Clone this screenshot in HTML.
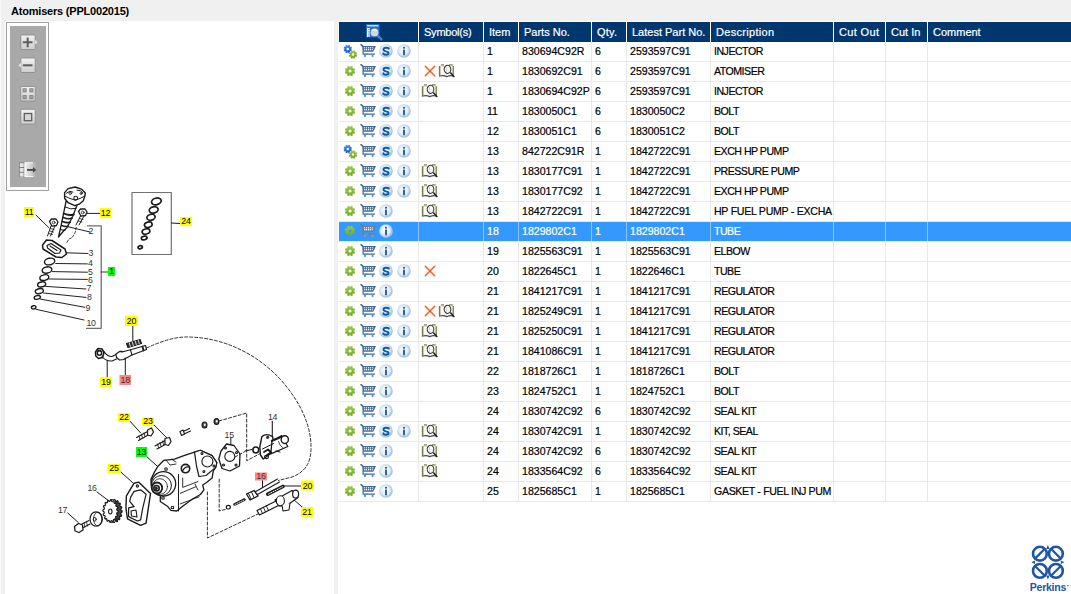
<!DOCTYPE html>
<html><head><meta charset="utf-8">
<style>
*{margin:0;padding:0;box-sizing:border-box}
html,body{width:1071px;height:594px;overflow:hidden;background:#f0f0f0;font-family:"Liberation Sans",sans-serif;position:relative}
.a{position:absolute}
.title{left:11px;top:5px;font-size:11px;font-weight:bold;color:#000;letter-spacing:-0.2px;white-space:nowrap}
.lp{left:5px;top:21px;width:329px;height:573px;background:#fff}
.tp{left:338px;top:21px;width:733px;height:573px;background:#fff}
.hdr{left:339px;top:22px;width:732px;height:20px;background:#00376f}
.hs{top:22px;width:1px;height:20px;background:#fff}
.ht{top:26px;font-size:11px;color:#fff;white-space:nowrap;-webkit-text-stroke:0.2px #fff}
.rl{left:339px;width:732px;height:1px;background:#e9e9e9}
.vl{width:1px;background:#e9e9e9}
.hl{left:339px;width:732px;height:19px;background:#3399ff}
.ct{font-size:10.6px;color:#000;white-space:nowrap;overflow:hidden;-webkit-text-stroke:0.2px #000}
.ct.w{-webkit-text-stroke:0.2px #fff}
.w{color:#fff}
</style></head><body>
<div class="a title">Atomisers (PPL002015)</div>
<div class="a lp"></div>
<div class="a" style="left:0;top:1px;width:1px;height:593px;background:#fafafa"></div>
<div class="a tp"></div>
<div class="a hdr"></div>

<div class="a hs" style="left:418px"></div>
<div class="a hs" style="left:483px"></div>
<div class="a hs" style="left:518px"></div>
<div class="a hs" style="left:591px"></div>
<div class="a hs" style="left:626px"></div>
<div class="a hs" style="left:710px"></div>
<div class="a hs" style="left:833px"></div>
<div class="a hs" style="left:885px"></div>
<div class="a hs" style="left:927px"></div>
<div class="a ht" style="left:424px;letter-spacing:-0.23px">Symbol(s)</div>
<div class="a ht" style="left:489px;letter-spacing:0px">Item</div>
<div class="a ht" style="left:524px;letter-spacing:0px">Parts No.</div>
<div class="a ht" style="left:597px;letter-spacing:0.2px">Qty.</div>
<div class="a ht" style="left:632px;letter-spacing:0px">Latest Part No.</div>
<div class="a ht" style="left:716px;letter-spacing:0.3px">Description</div>
<div class="a ht" style="left:839px;letter-spacing:0.36px">Cut Out</div>
<div class="a ht" style="left:891px;letter-spacing:0px">Cut In</div>
<div class="a ht" style="left:933px;letter-spacing:0px">Comment</div>
<div class="a vl" style="left:418px;top:42px;height:460px"></div>
<div class="a vl" style="left:483px;top:42px;height:460px"></div>
<div class="a vl" style="left:518px;top:42px;height:460px"></div>
<div class="a vl" style="left:591px;top:42px;height:460px"></div>
<div class="a vl" style="left:626px;top:42px;height:460px"></div>
<div class="a vl" style="left:710px;top:42px;height:460px"></div>
<div class="a vl" style="left:833px;top:42px;height:460px"></div>
<div class="a vl" style="left:885px;top:42px;height:460px"></div>
<div class="a vl" style="left:927px;top:42px;height:460px"></div>
<div class="a rl" style="top:61px"></div>
<svg class="a" style="left:343px;top:44px" width="15" height="15"><use href="#gear2"/></svg>
<svg class="a" style="left:360px;top:44px" width="17" height="15"><use href="#cart"/></svg>
<svg class="a" style="left:379px;top:44px" width="14" height="14"><use href="#sic"/></svg>
<svg class="a" style="left:397px;top:44px" width="14" height="14"><use href="#iic"/></svg>
<div class="a ct" style="left:487px;top:45px;width:31px">1</div>
<div class="a ct" style="left:522px;top:45px;width:69px">830694C92R</div>
<div class="a ct" style="left:595px;top:45px;width:31px">6</div>
<div class="a ct" style="left:630px;top:45px;width:80px">2593597C91</div>
<div class="a ct" style="left:714px;top:45px;width:119px;letter-spacing:-0.5px">INJECTOR</div>
<div class="a rl" style="top:81px"></div>
<svg class="a" style="left:344px;top:65px" width="12" height="12"><use href="#gear"/></svg>
<svg class="a" style="left:360px;top:64px" width="17" height="15"><use href="#cart"/></svg>
<svg class="a" style="left:379px;top:64px" width="14" height="14"><use href="#sic"/></svg>
<svg class="a" style="left:397px;top:64px" width="14" height="14"><use href="#iic"/></svg>
<svg class="a" style="left:424px;top:65px" width="12" height="12"><use href="#xic"/></svg>
<svg class="a" style="left:438px;top:64px" width="17" height="15"><use href="#book"/></svg>
<div class="a ct" style="left:487px;top:65px;width:31px">1</div>
<div class="a ct" style="left:522px;top:65px;width:69px">1830692C91</div>
<div class="a ct" style="left:595px;top:65px;width:31px">6</div>
<div class="a ct" style="left:630px;top:65px;width:80px">2593597C91</div>
<div class="a ct" style="left:714px;top:65px;width:119px;letter-spacing:-0.5px">ATOMISER</div>
<div class="a rl" style="top:101px"></div>
<svg class="a" style="left:344px;top:85px" width="12" height="12"><use href="#gear"/></svg>
<svg class="a" style="left:360px;top:84px" width="17" height="15"><use href="#cart"/></svg>
<svg class="a" style="left:379px;top:84px" width="14" height="14"><use href="#sic"/></svg>
<svg class="a" style="left:397px;top:84px" width="14" height="14"><use href="#iic"/></svg>
<svg class="a" style="left:421px;top:84px" width="17" height="15"><use href="#book"/></svg>
<div class="a ct" style="left:487px;top:85px;width:31px">1</div>
<div class="a ct" style="left:522px;top:85px;width:69px">1830694C92P</div>
<div class="a ct" style="left:595px;top:85px;width:31px">6</div>
<div class="a ct" style="left:630px;top:85px;width:80px">2593597C91</div>
<div class="a ct" style="left:714px;top:85px;width:119px;letter-spacing:-0.5px">INJECTOR</div>
<div class="a rl" style="top:121px"></div>
<svg class="a" style="left:344px;top:105px" width="12" height="12"><use href="#gear"/></svg>
<svg class="a" style="left:360px;top:104px" width="17" height="15"><use href="#cart"/></svg>
<svg class="a" style="left:379px;top:104px" width="14" height="14"><use href="#sic"/></svg>
<svg class="a" style="left:397px;top:104px" width="14" height="14"><use href="#iic"/></svg>
<div class="a ct" style="left:487px;top:105px;width:31px">11</div>
<div class="a ct" style="left:522px;top:105px;width:69px">1830050C1</div>
<div class="a ct" style="left:595px;top:105px;width:31px">6</div>
<div class="a ct" style="left:630px;top:105px;width:80px">1830050C2</div>
<div class="a ct" style="left:714px;top:105px;width:119px;letter-spacing:-0.5px">BOLT</div>
<div class="a rl" style="top:141px"></div>
<svg class="a" style="left:344px;top:125px" width="12" height="12"><use href="#gear"/></svg>
<svg class="a" style="left:360px;top:124px" width="17" height="15"><use href="#cart"/></svg>
<svg class="a" style="left:379px;top:124px" width="14" height="14"><use href="#sic"/></svg>
<svg class="a" style="left:397px;top:124px" width="14" height="14"><use href="#iic"/></svg>
<div class="a ct" style="left:487px;top:125px;width:31px">12</div>
<div class="a ct" style="left:522px;top:125px;width:69px">1830051C1</div>
<div class="a ct" style="left:595px;top:125px;width:31px">6</div>
<div class="a ct" style="left:630px;top:125px;width:80px">1830051C2</div>
<div class="a ct" style="left:714px;top:125px;width:119px;letter-spacing:-0.5px">BOLT</div>
<div class="a rl" style="top:161px"></div>
<svg class="a" style="left:343px;top:144px" width="15" height="15"><use href="#gear2"/></svg>
<svg class="a" style="left:360px;top:144px" width="17" height="15"><use href="#cart"/></svg>
<svg class="a" style="left:379px;top:144px" width="14" height="14"><use href="#sic"/></svg>
<svg class="a" style="left:397px;top:144px" width="14" height="14"><use href="#iic"/></svg>
<div class="a ct" style="left:487px;top:145px;width:31px">13</div>
<div class="a ct" style="left:522px;top:145px;width:69px">842722C91R</div>
<div class="a ct" style="left:595px;top:145px;width:31px">1</div>
<div class="a ct" style="left:630px;top:145px;width:80px">1842722C91</div>
<div class="a ct" style="left:714px;top:145px;width:119px;letter-spacing:-0.5px">EXCH HP PUMP</div>
<div class="a rl" style="top:181px"></div>
<svg class="a" style="left:344px;top:165px" width="12" height="12"><use href="#gear"/></svg>
<svg class="a" style="left:360px;top:164px" width="17" height="15"><use href="#cart"/></svg>
<svg class="a" style="left:379px;top:164px" width="14" height="14"><use href="#sic"/></svg>
<svg class="a" style="left:397px;top:164px" width="14" height="14"><use href="#iic"/></svg>
<svg class="a" style="left:421px;top:164px" width="17" height="15"><use href="#book"/></svg>
<div class="a ct" style="left:487px;top:165px;width:31px">13</div>
<div class="a ct" style="left:522px;top:165px;width:69px">1830177C91</div>
<div class="a ct" style="left:595px;top:165px;width:31px">1</div>
<div class="a ct" style="left:630px;top:165px;width:80px">1842722C91</div>
<div class="a ct" style="left:714px;top:165px;width:119px;letter-spacing:-0.5px">PRESSURE PUMP</div>
<div class="a rl" style="top:201px"></div>
<svg class="a" style="left:344px;top:185px" width="12" height="12"><use href="#gear"/></svg>
<svg class="a" style="left:360px;top:184px" width="17" height="15"><use href="#cart"/></svg>
<svg class="a" style="left:379px;top:184px" width="14" height="14"><use href="#sic"/></svg>
<svg class="a" style="left:397px;top:184px" width="14" height="14"><use href="#iic"/></svg>
<svg class="a" style="left:421px;top:184px" width="17" height="15"><use href="#book"/></svg>
<div class="a ct" style="left:487px;top:185px;width:31px">13</div>
<div class="a ct" style="left:522px;top:185px;width:69px">1830177C92</div>
<div class="a ct" style="left:595px;top:185px;width:31px">1</div>
<div class="a ct" style="left:630px;top:185px;width:80px">1842722C91</div>
<div class="a ct" style="left:714px;top:185px;width:119px;letter-spacing:-0.5px">EXCH HP PUMP</div>
<div class="a rl" style="top:221px"></div>
<svg class="a" style="left:344px;top:205px" width="12" height="12"><use href="#gear"/></svg>
<svg class="a" style="left:360px;top:204px" width="17" height="15"><use href="#cart"/></svg>
<svg class="a" style="left:379px;top:204px" width="14" height="14"><use href="#iic"/></svg>
<svg class="a" style="left:421px;top:204px" width="17" height="15"><use href="#book"/></svg>
<div class="a ct" style="left:487px;top:205px;width:31px">13</div>
<div class="a ct" style="left:522px;top:205px;width:69px">1842722C91</div>
<div class="a ct" style="left:595px;top:205px;width:31px">1</div>
<div class="a ct" style="left:630px;top:205px;width:80px">1842722C91</div>
<div class="a ct" style="left:714px;top:205px;width:119px;letter-spacing:-0.28px">HP FUEL PUMP - EXCHA</div>
<div class="a hl" style="top:222px"></div>
<div class="a" style="left:418px;top:222px;width:1px;height:19px;background:#8cc4ff"></div>
<div class="a" style="left:483px;top:222px;width:1px;height:19px;background:#8cc4ff"></div>
<div class="a" style="left:518px;top:222px;width:1px;height:19px;background:#8cc4ff"></div>
<div class="a" style="left:591px;top:222px;width:1px;height:19px;background:#8cc4ff"></div>
<div class="a" style="left:626px;top:222px;width:1px;height:19px;background:#8cc4ff"></div>
<div class="a" style="left:710px;top:222px;width:1px;height:19px;background:#8cc4ff"></div>
<div class="a" style="left:833px;top:222px;width:1px;height:19px;background:#8cc4ff"></div>
<div class="a" style="left:885px;top:222px;width:1px;height:19px;background:#8cc4ff"></div>
<div class="a" style="left:927px;top:222px;width:1px;height:19px;background:#8cc4ff"></div>
<div class="a rl" style="top:241px"></div>
<svg class="a" style="left:344px;top:225px" width="12" height="12"><use href="#gear"/></svg>
<svg class="a" style="left:360px;top:224px" width="17" height="15"><use href="#cartsel"/></svg>
<svg class="a" style="left:379px;top:224px" width="14" height="14"><use href="#iic"/></svg>
<div class="a ct w" style="left:487px;top:225px;width:31px">18</div>
<div class="a ct w" style="left:522px;top:225px;width:69px">1829802C1</div>
<div class="a ct w" style="left:595px;top:225px;width:31px">1</div>
<div class="a ct w" style="left:630px;top:225px;width:80px">1829802C1</div>
<div class="a ct w" style="left:714px;top:225px;width:119px;letter-spacing:-0.5px">TUBE</div>
<div class="a rl" style="top:261px"></div>
<svg class="a" style="left:344px;top:245px" width="12" height="12"><use href="#gear"/></svg>
<svg class="a" style="left:360px;top:244px" width="17" height="15"><use href="#cart"/></svg>
<svg class="a" style="left:379px;top:244px" width="14" height="14"><use href="#iic"/></svg>
<div class="a ct" style="left:487px;top:245px;width:31px">19</div>
<div class="a ct" style="left:522px;top:245px;width:69px">1825563C91</div>
<div class="a ct" style="left:595px;top:245px;width:31px">1</div>
<div class="a ct" style="left:630px;top:245px;width:80px">1825563C91</div>
<div class="a ct" style="left:714px;top:245px;width:119px;letter-spacing:-0.5px">ELBOW</div>
<div class="a rl" style="top:281px"></div>
<svg class="a" style="left:344px;top:265px" width="12" height="12"><use href="#gear"/></svg>
<svg class="a" style="left:360px;top:264px" width="17" height="15"><use href="#cart"/></svg>
<svg class="a" style="left:379px;top:264px" width="14" height="14"><use href="#sic"/></svg>
<svg class="a" style="left:397px;top:264px" width="14" height="14"><use href="#iic"/></svg>
<svg class="a" style="left:424px;top:265px" width="12" height="12"><use href="#xic"/></svg>
<div class="a ct" style="left:487px;top:265px;width:31px">20</div>
<div class="a ct" style="left:522px;top:265px;width:69px">1822645C1</div>
<div class="a ct" style="left:595px;top:265px;width:31px">1</div>
<div class="a ct" style="left:630px;top:265px;width:80px">1822646C1</div>
<div class="a ct" style="left:714px;top:265px;width:119px;letter-spacing:-0.5px">TUBE</div>
<div class="a rl" style="top:301px"></div>
<svg class="a" style="left:344px;top:285px" width="12" height="12"><use href="#gear"/></svg>
<svg class="a" style="left:360px;top:284px" width="17" height="15"><use href="#cart"/></svg>
<svg class="a" style="left:379px;top:284px" width="14" height="14"><use href="#iic"/></svg>
<div class="a ct" style="left:487px;top:285px;width:31px">21</div>
<div class="a ct" style="left:522px;top:285px;width:69px">1841217C91</div>
<div class="a ct" style="left:595px;top:285px;width:31px">1</div>
<div class="a ct" style="left:630px;top:285px;width:80px">1841217C91</div>
<div class="a ct" style="left:714px;top:285px;width:119px;letter-spacing:-0.5px">REGULATOR</div>
<div class="a rl" style="top:321px"></div>
<svg class="a" style="left:344px;top:305px" width="12" height="12"><use href="#gear"/></svg>
<svg class="a" style="left:360px;top:304px" width="17" height="15"><use href="#cart"/></svg>
<svg class="a" style="left:379px;top:304px" width="14" height="14"><use href="#sic"/></svg>
<svg class="a" style="left:397px;top:304px" width="14" height="14"><use href="#iic"/></svg>
<svg class="a" style="left:424px;top:305px" width="12" height="12"><use href="#xic"/></svg>
<svg class="a" style="left:438px;top:304px" width="17" height="15"><use href="#book"/></svg>
<div class="a ct" style="left:487px;top:305px;width:31px">21</div>
<div class="a ct" style="left:522px;top:305px;width:69px">1825249C91</div>
<div class="a ct" style="left:595px;top:305px;width:31px">1</div>
<div class="a ct" style="left:630px;top:305px;width:80px">1841217C91</div>
<div class="a ct" style="left:714px;top:305px;width:119px;letter-spacing:-0.5px">REGULATOR</div>
<div class="a rl" style="top:341px"></div>
<svg class="a" style="left:344px;top:325px" width="12" height="12"><use href="#gear"/></svg>
<svg class="a" style="left:360px;top:324px" width="17" height="15"><use href="#cart"/></svg>
<svg class="a" style="left:379px;top:324px" width="14" height="14"><use href="#sic"/></svg>
<svg class="a" style="left:397px;top:324px" width="14" height="14"><use href="#iic"/></svg>
<svg class="a" style="left:421px;top:324px" width="17" height="15"><use href="#book"/></svg>
<div class="a ct" style="left:487px;top:325px;width:31px">21</div>
<div class="a ct" style="left:522px;top:325px;width:69px">1825250C91</div>
<div class="a ct" style="left:595px;top:325px;width:31px">1</div>
<div class="a ct" style="left:630px;top:325px;width:80px">1841217C91</div>
<div class="a ct" style="left:714px;top:325px;width:119px;letter-spacing:-0.5px">REGULATOR</div>
<div class="a rl" style="top:361px"></div>
<svg class="a" style="left:344px;top:345px" width="12" height="12"><use href="#gear"/></svg>
<svg class="a" style="left:360px;top:344px" width="17" height="15"><use href="#cart"/></svg>
<svg class="a" style="left:379px;top:344px" width="14" height="14"><use href="#sic"/></svg>
<svg class="a" style="left:397px;top:344px" width="14" height="14"><use href="#iic"/></svg>
<svg class="a" style="left:421px;top:344px" width="17" height="15"><use href="#book"/></svg>
<div class="a ct" style="left:487px;top:345px;width:31px">21</div>
<div class="a ct" style="left:522px;top:345px;width:69px">1841086C91</div>
<div class="a ct" style="left:595px;top:345px;width:31px">1</div>
<div class="a ct" style="left:630px;top:345px;width:80px">1841217C91</div>
<div class="a ct" style="left:714px;top:345px;width:119px;letter-spacing:-0.5px">REGULATOR</div>
<div class="a rl" style="top:381px"></div>
<svg class="a" style="left:344px;top:365px" width="12" height="12"><use href="#gear"/></svg>
<svg class="a" style="left:360px;top:364px" width="17" height="15"><use href="#cart"/></svg>
<svg class="a" style="left:379px;top:364px" width="14" height="14"><use href="#iic"/></svg>
<div class="a ct" style="left:487px;top:365px;width:31px">22</div>
<div class="a ct" style="left:522px;top:365px;width:69px">1818726C1</div>
<div class="a ct" style="left:595px;top:365px;width:31px">1</div>
<div class="a ct" style="left:630px;top:365px;width:80px">1818726C1</div>
<div class="a ct" style="left:714px;top:365px;width:119px;letter-spacing:-0.5px">BOLT</div>
<div class="a rl" style="top:401px"></div>
<svg class="a" style="left:344px;top:385px" width="12" height="12"><use href="#gear"/></svg>
<svg class="a" style="left:360px;top:384px" width="17" height="15"><use href="#cart"/></svg>
<svg class="a" style="left:379px;top:384px" width="14" height="14"><use href="#iic"/></svg>
<div class="a ct" style="left:487px;top:385px;width:31px">23</div>
<div class="a ct" style="left:522px;top:385px;width:69px">1824752C1</div>
<div class="a ct" style="left:595px;top:385px;width:31px">1</div>
<div class="a ct" style="left:630px;top:385px;width:80px">1824752C1</div>
<div class="a ct" style="left:714px;top:385px;width:119px;letter-spacing:-0.5px">BOLT</div>
<div class="a rl" style="top:421px"></div>
<svg class="a" style="left:344px;top:405px" width="12" height="12"><use href="#gear"/></svg>
<svg class="a" style="left:360px;top:404px" width="17" height="15"><use href="#cart"/></svg>
<svg class="a" style="left:379px;top:404px" width="14" height="14"><use href="#iic"/></svg>
<div class="a ct" style="left:487px;top:405px;width:31px">24</div>
<div class="a ct" style="left:522px;top:405px;width:69px">1830742C92</div>
<div class="a ct" style="left:595px;top:405px;width:31px">6</div>
<div class="a ct" style="left:630px;top:405px;width:80px">1830742C92</div>
<div class="a ct" style="left:714px;top:405px;width:119px;letter-spacing:-0.5px">SEAL KIT</div>
<div class="a rl" style="top:441px"></div>
<svg class="a" style="left:344px;top:425px" width="12" height="12"><use href="#gear"/></svg>
<svg class="a" style="left:360px;top:424px" width="17" height="15"><use href="#cart"/></svg>
<svg class="a" style="left:379px;top:424px" width="14" height="14"><use href="#sic"/></svg>
<svg class="a" style="left:397px;top:424px" width="14" height="14"><use href="#iic"/></svg>
<svg class="a" style="left:421px;top:424px" width="17" height="15"><use href="#book"/></svg>
<div class="a ct" style="left:487px;top:425px;width:31px">24</div>
<div class="a ct" style="left:522px;top:425px;width:69px">1830742C91</div>
<div class="a ct" style="left:595px;top:425px;width:31px">1</div>
<div class="a ct" style="left:630px;top:425px;width:80px">1830742C92</div>
<div class="a ct" style="left:714px;top:425px;width:119px;letter-spacing:-0.5px">KIT, SEAL</div>
<div class="a rl" style="top:461px"></div>
<svg class="a" style="left:344px;top:445px" width="12" height="12"><use href="#gear"/></svg>
<svg class="a" style="left:360px;top:444px" width="17" height="15"><use href="#cart"/></svg>
<svg class="a" style="left:379px;top:444px" width="14" height="14"><use href="#iic"/></svg>
<svg class="a" style="left:421px;top:444px" width="17" height="15"><use href="#book"/></svg>
<div class="a ct" style="left:487px;top:445px;width:31px">24</div>
<div class="a ct" style="left:522px;top:445px;width:69px">1830742C92</div>
<div class="a ct" style="left:595px;top:445px;width:31px">6</div>
<div class="a ct" style="left:630px;top:445px;width:80px">1830742C92</div>
<div class="a ct" style="left:714px;top:445px;width:119px;letter-spacing:-0.5px">SEAL KIT</div>
<div class="a rl" style="top:481px"></div>
<svg class="a" style="left:344px;top:465px" width="12" height="12"><use href="#gear"/></svg>
<svg class="a" style="left:360px;top:464px" width="17" height="15"><use href="#cart"/></svg>
<svg class="a" style="left:379px;top:464px" width="14" height="14"><use href="#iic"/></svg>
<svg class="a" style="left:421px;top:464px" width="17" height="15"><use href="#book"/></svg>
<div class="a ct" style="left:487px;top:465px;width:31px">24</div>
<div class="a ct" style="left:522px;top:465px;width:69px">1833564C92</div>
<div class="a ct" style="left:595px;top:465px;width:31px">6</div>
<div class="a ct" style="left:630px;top:465px;width:80px">1833564C92</div>
<div class="a ct" style="left:714px;top:465px;width:119px;letter-spacing:-0.5px">SEAL KIT</div>
<div class="a rl" style="top:501px"></div>
<svg class="a" style="left:344px;top:485px" width="12" height="12"><use href="#gear"/></svg>
<svg class="a" style="left:360px;top:484px" width="17" height="15"><use href="#cart"/></svg>
<svg class="a" style="left:379px;top:484px" width="14" height="14"><use href="#iic"/></svg>
<div class="a ct" style="left:487px;top:485px;width:31px">25</div>
<div class="a ct" style="left:522px;top:485px;width:69px">1825685C1</div>
<div class="a ct" style="left:595px;top:485px;width:31px">1</div>
<div class="a ct" style="left:630px;top:485px;width:80px">1825685C1</div>
<div class="a ct" style="left:714px;top:485px;width:119px;letter-spacing:-0.34px">GASKET - FUEL INJ PUM</div>
<svg width="0" height="0" style="position:absolute;left:0;top:0">
<defs>
<radialGradient id="cg" cx="0.45" cy="0.45" r="0.6">
<stop offset="0" stop-color="#ffffff"/><stop offset="0.55" stop-color="#e2edf7"/><stop offset="0.85" stop-color="#9fc1e2"/><stop offset="1" stop-color="#b9d3eb"/>
</radialGradient>
<linearGradient id="gG" x1="0" y1="0" x2="0" y2="1"><stop offset="0" stop-color="#9acb3e"/><stop offset="1" stop-color="#6da72a"/></linearGradient>
<linearGradient id="gB" x1="0" y1="0" x2="0" y2="1"><stop offset="0" stop-color="#4b8bf5"/><stop offset="1" stop-color="#1c56c8"/></linearGradient>
<g id="gear"><path fill="url(#gG)" fill-rule="evenodd" d="M11.19,6.82 L10.25,9.09 L8.93,8.42 L8.42,8.93 L9.09,10.25 L6.82,11.19 L6.36,9.78 L5.64,9.78 L5.18,11.19 L2.91,10.25 L3.58,8.93 L3.07,8.42 L1.75,9.09 L0.81,6.82 L2.22,6.36 L2.22,5.64 L0.81,5.18 L1.75,2.91 L3.07,3.58 L3.58,3.07 L2.91,1.75 L5.18,0.81 L5.64,2.22 L6.36,2.22 L6.82,0.81 L9.09,1.75 L8.42,3.07 L8.93,3.58 L10.25,2.91 L11.19,5.18 L9.78,5.64 L9.78,6.36Z M7.50,6.00 A1.5,1.5 0 1 0 4.50,6.00 A1.5,1.5 0 1 0 7.50,6.00Z"/></g>
<g id="gear2"><path fill="url(#gB)" fill-rule="evenodd" d="M9.05,5.67 L8.28,7.53 L7.27,7.04 L6.84,7.47 L7.33,8.48 L5.47,9.25 L5.10,8.19 L4.50,8.19 L4.13,9.25 L2.27,8.48 L2.76,7.47 L2.33,7.04 L1.32,7.53 L0.55,5.67 L1.61,5.30 L1.61,4.70 L0.55,4.33 L1.32,2.47 L2.33,2.96 L2.76,2.53 L2.27,1.52 L4.13,0.75 L4.50,1.81 L5.10,1.81 L5.47,0.75 L7.33,1.52 L6.84,2.53 L7.27,2.96 L8.28,2.47 L9.05,4.33 L7.99,4.70 L7.99,5.30Z M6.00,5.00 A1.2,1.2 0 1 0 3.60,5.00 A1.2,1.2 0 1 0 6.00,5.00Z"/><path fill="url(#gG)" fill-rule="evenodd" d="M14.25,11.17 L13.48,13.03 L12.47,12.54 L12.04,12.97 L12.53,13.98 L10.67,14.75 L10.30,13.69 L9.70,13.69 L9.33,14.75 L7.47,13.98 L7.96,12.97 L7.53,12.54 L6.52,13.03 L5.75,11.17 L6.81,10.80 L6.81,10.20 L5.75,9.83 L6.52,7.97 L7.53,8.46 L7.96,8.03 L7.47,7.02 L9.33,6.25 L9.70,7.31 L10.30,7.31 L10.67,6.25 L12.53,7.02 L12.04,8.03 L12.47,8.46 L13.48,7.97 L14.25,9.83 L13.19,10.20 L13.19,10.80Z M11.20,10.50 A1.2,1.2 0 1 0 8.80,10.50 A1.2,1.2 0 1 0 11.20,10.50Z"/></g>
<g id="cart">
<path d="M1,0.6 L3,2.4" stroke="#44699a" stroke-width="1.5" stroke-linecap="round"/>
<path d="M2.4,2 H16 L13.2,7.8 H3.3 Z" fill="#44699a"/>
<g fill="#fff"><rect x="3.6" y="3.2" width="1.4" height="1.1"/><rect x="5.9" y="3.2" width="1.2" height="1.1"/><rect x="8" y="3.2" width="1.2" height="1.1"/><rect x="10" y="3.2" width="1.1" height="1.1"/><rect x="12.1" y="3.2" width="1.1" height="1.1"/>
<rect x="4.2" y="4.9" width="1.2" height="1.5"/><rect x="6" y="4.9" width="1.2" height="1.5"/><rect x="8.1" y="4.9" width="1.2" height="1.5"/><rect x="10.1" y="4.9" width="1.1" height="1.5"/><rect x="12" y="4.9" width="0.8" height="1.3"/></g>
<path d="M3.1,2.2 V10.2 H14.9" stroke="#44699a" stroke-width="1.2" fill="none"/>
<path d="M4.5,10.2 H8" stroke="#3d8fe0" stroke-width="1.0"/>
<circle cx="5" cy="11.9" r="1.05" fill="#3d8fe0"/><circle cx="12.6" cy="11.9" r="1.05" fill="#3d8fe0"/>
</g>
<g id="cartsel">
<path d="M1,0.6 L3,2.4" stroke="#6d7b90" stroke-width="1.5" stroke-linecap="round"/>
<path d="M2.4,2 H16 L13.2,7.8 H3.3 Z" fill="#6d7b90"/>
<g fill="#fff"><rect x="3.6" y="3.2" width="1.4" height="1.1"/><rect x="5.9" y="3.2" width="1.2" height="1.1"/><rect x="8" y="3.2" width="1.2" height="1.1"/><rect x="10" y="3.2" width="1.1" height="1.1"/><rect x="12.1" y="3.2" width="1.1" height="1.1"/>
<rect x="4.2" y="4.9" width="1.2" height="1.5"/><rect x="6" y="4.9" width="1.2" height="1.5"/><rect x="8.1" y="4.9" width="1.2" height="1.5"/><rect x="10.1" y="4.9" width="1.1" height="1.5"/><rect x="12" y="4.9" width="0.8" height="1.3"/></g>
<path d="M3.1,2.2 V10.2 H14.9" stroke="#6d7b90" stroke-width="1.2" fill="none"/>
<path d="M4.5,10.2 H8" stroke="#7f9fc8" stroke-width="1.0"/>
<circle cx="5" cy="11.9" r="1.05" fill="#7f9fc8"/><circle cx="12.6" cy="11.9" r="1.05" fill="#7f9fc8"/>
</g>
<g id="sic"><circle cx="7" cy="7" r="6.8" fill="url(#cg)"/><path d="M9.7,5.6 V4.3 C9.1,3.8 8.2,3.7 7,3.7 C5.4,3.7 4.5,4.4 4.5,5.5 C4.5,6.8 5.7,7.1 7,7.4 C8.5,7.7 9.6,8.1 9.6,9.3 C9.6,10.3 8.6,10.7 7,10.7 C5.8,10.7 5,10.5 4.4,10 V8.6" stroke="#0b5aa6" stroke-width="1.9" fill="none"/></g>
<g id="iic"><circle cx="7" cy="7" r="6.8" fill="url(#cg)"/><rect x="6" y="2.9" width="2" height="1.7" fill="#2c62a8"/><rect x="6" y="5.6" width="2" height="5.6" fill="#2c62a8"/></g>
<g id="xic"><path d="M1.3,1.3 L10.7,10.7 M10.7,1.3 L1.3,10.7" stroke="#ff5a1a" stroke-width="1.5" stroke-linecap="round"/></g>
<g id="book">
<path d="M2,1.5 H14.8 V12.6 H2 Z" fill="#f6f6f6"/>
<path d="M2.5,2 L8.5,3 L8.5,12 L2.5,11 Z" fill="#fbfbfb" stroke="#bdbdbd" stroke-width="0.6"/>
<path d="M1.5,2 V12.8 M15.2,2 V12.8" stroke="#7b7b45" stroke-width="1.3"/>
<path d="M3,0.9 H6 M11,0.9 H14.8" stroke="#85854a" stroke-width="1.1"/>
<path d="M2,12 Q5.5,11 8.8,12.7 Q12,11 15,12" stroke="#4d4d4d" stroke-width="1.1" fill="none"/>
<ellipse cx="9.5" cy="5.3" rx="3.3" ry="4.1" stroke="#3a3a3a" stroke-width="1.05" fill="none"/>
<path d="M12.3,8.6 L16.3,12.9" stroke="#1e1e1e" stroke-width="1.5"/>
</g>
</defs></svg>
<svg class="a" style="left:365px;top:23px" width="19" height="19">
<rect x="1" y="1" width="13.5" height="13.5" fill="#1f6fc0"/>
<rect x="2" y="2.2" width="11.5" height="1.2" fill="#f2f6fb"/>
<rect x="2" y="5" width="2.8" height="9" fill="#ffffff"/>
<rect x="3.3" y="6.2" width="1.2" height="1" fill="#1f5fb0"/><rect x="3.3" y="8.4" width="1.2" height="1" fill="#1f5fb0"/><rect x="3.3" y="10.6" width="1.2" height="1" fill="#1f5fb0"/><rect x="3.3" y="12.6" width="1.2" height="1" fill="#1f5fb0"/>
<path d="M12.2,12.2 L17,17" stroke="#3f86d6" stroke-width="2.4"/>
<circle cx="9.5" cy="9.4" r="4.7" fill="#2a73c4"/>
<circle cx="9.5" cy="9.4" r="3.9" fill="#d4d7dc"/>
<path d="M7.2,7.6 Q9.5,6 12,7.8" stroke="#ffffff" stroke-width="1.2" fill="none"/>
</svg>

<svg class="a" style="left:0;top:0" width="334" height="594" viewBox="0 0 334 594">
<defs>
<linearGradient id="btg" x1="0" y1="0" x2="0" y2="1"><stop offset="0" stop-color="#f4f4f4"/><stop offset="0.5" stop-color="#dedede"/><stop offset="1" stop-color="#cfcfcf"/></linearGradient>
</defs>
<rect x="6.5" y="22.5" width="42" height="168" fill="#fff" stroke="#a0a0a0" stroke-width="1"/>
<rect x="10" y="26" width="36" height="161" fill="#a9a9a9"/>
<g>
<rect x="20.8" y="35" width="14.4" height="14.5" rx="1" fill="url(#btg)" stroke="#8c8c8c" stroke-width="0.9"/>
<path d="M22.8,42.3 H32.5 M27.7,37.5 V47.2" stroke="#5e5e5e" stroke-width="2"/>
<path d="M35.2,39.8 L37.3,42.3 L35.2,44.8 Z" fill="#e8e8e8"/>
<rect x="20.8" y="58" width="14.4" height="14.5" rx="1" fill="url(#btg)" stroke="#8c8c8c" stroke-width="0.9"/>
<path d="M22.8,65.3 H32.5" stroke="#5e5e5e" stroke-width="2"/>
<path d="M20.8,62.8 L18.7,65.3 L20.8,67.8 Z" fill="#e8e8e8"/>
<rect x="20.8" y="86.5" width="14.4" height="14.5" rx="1" fill="url(#btg)" stroke="#8c8c8c" stroke-width="0.9"/>
<rect x="22.6" y="88.3" width="4" height="4" fill="#7a7a7a"/><rect x="29.4" y="88.3" width="4" height="4" fill="#7a7a7a"/>
<rect x="22.6" y="95.1" width="4" height="4" fill="#7a7a7a"/><rect x="29.4" y="95.1" width="4" height="4" fill="#7a7a7a"/>
<rect x="23.3" y="89" width="2.6" height="2.6" fill="#a0a0a0"/><rect x="30.1" y="89" width="2.6" height="2.6" fill="#a0a0a0"/>
<rect x="23.3" y="95.8" width="2.6" height="2.6" fill="#a0a0a0"/><rect x="30.1" y="95.8" width="2.6" height="2.6" fill="#a0a0a0"/>
<rect x="20.8" y="109.3" width="14.4" height="14.8" rx="1" fill="url(#btg)" stroke="#8c8c8c" stroke-width="0.9"/>
<rect x="24.3" y="113.5" width="7.4" height="7.2" fill="#d4d4d4" stroke="#5e5e5e" stroke-width="1.3"/>
<linearGradient id="pg" x1="0" y1="0" x2="1" y2="0"><stop offset="0" stop-color="#f0f0f0"/><stop offset="0.6" stop-color="#d0d0d0"/><stop offset="1" stop-color="#a9a9a9"/></linearGradient>
<rect x="19" y="162.4" width="5.2" height="14.6" fill="#7d7d7d"/>
<rect x="19.8" y="163.2" width="3.8" height="3.8" fill="#e6e6e6"/>
<rect x="19.8" y="168" width="3.8" height="3.8" fill="#e6e6e6"/>
<rect x="19.8" y="172.8" width="3.8" height="3.8" fill="#e6e6e6"/>
<rect x="24.5" y="162.4" width="11.5" height="14.6" fill="url(#pg)"/>
<path d="M25.2,162.8 V176.6 H33 M25.2,162.8 H33" stroke="#fff" stroke-width="0.9" fill="none"/>
<path d="M27,169.9 H34" stroke="#4a4a4a" stroke-width="1.9"/>
<path d="M33,167 L36.3,169.9 L33,172.8 Z" fill="#4a4a4a"/>
</g>
</svg>
<svg class="a" style="left:0;top:0" width="334" height="594" viewBox="0 0 334 594" font-family="Liberation Sans">
<g fill="none" stroke="#1a1a1a" stroke-width="1.1" stroke-linejoin="round" stroke-linecap="round">
<!-- ===== Injector group ===== -->
<path d="M66.1,201.2 L61.1,225.4 L59.5,232.5 L58.5,237 L63.1,231.5 L67.1,227.4 L72.7,216.3 L77.2,204.7 Z" fill="#fff" stroke-width="1.3"/>
<path d="M65,207 Q71,210 76,208.5" stroke-width="1"/>
<path d="M63.8,213.5 Q69,216 73.8,214.5" stroke-width="1.9"/>
<path d="M63.2,217.5 Q68,219.5 72,218.3" stroke-width="1.7"/>
<path d="M62.5,221.5 Q67,223.3 70.2,222.2" stroke-width="1.7"/>
<path d="M61.8,225.6 Q65.5,227 68.2,226.2" stroke-width="1.6"/>
<path d="M60.5,229.5 Q63,230.5 65,230" stroke-width="1.3"/>
<path d="M64.6,192.6 L68.1,188.6 L75.2,187 L81.3,189.1 L85.3,193.1 L84.8,196.1 L83.3,200.7 L79.2,204.2 L74.7,205.7 L68.1,202.7 L64.6,198.2 Z" fill="#fff" stroke-width="1.4"/>
<path d="M65.1,196.3 Q72,199.5 75,200 Q80,199 84.8,196.1" stroke-width="1"/>
<path d="M66.5,193 Q70,190 73,192 M77,190 Q81,190 83,193" stroke-width="1"/>
<circle cx="75.7" cy="198.2" r="1.9" stroke-width="1.1"/>
<circle cx="70.2" cy="193.3" r="1.2" stroke-width="0.9"/>
<circle cx="81" cy="193.5" r="1" stroke-width="0.9"/>
<!-- bolt 11 -->
<path d="M49.5,221.5 L51.5,219 L56,219 L58,222 L56.5,225.5 L52,226.2 Z" fill="#fff" stroke-width="1.3"/>
<circle cx="53.7" cy="222.5" r="1.4" stroke-width="0.8"/>
<path d="M51,226 L47.5,236 M55,226 L50.5,236" stroke-width="1"/>
<path d="M50.5,228.5 L54,229.5 M50,231 L53.5,232 M49,233.5 L52.5,234.5" stroke-width="0.8"/>
<!-- bolt 12 -->
<path d="M78.5,211.5 L80.5,209 L85,209 L87,212 L85.5,215.5 L81,216.2 Z" fill="#fff" stroke-width="1.3"/>
<circle cx="82.7" cy="212.5" r="1.4" stroke-width="0.8"/>
<path d="M80.5,216 L76,225 M84,216 L79,225" stroke-width="1"/>
<path d="M79.5,218.5 L83,219.5 M78.5,221 L82,222" stroke-width="0.8"/>
<path d="M76.2,227.4 L75.2,232.5 L72.2,237.5 L69.1,239 L66.5,243" stroke-width="0.8" stroke-dasharray="2.5,1.5"/>
<!-- flange 3 -->
<path d="M42.5,245 L46.5,240 L52,240.5 L65,249 L66.5,254 L62,257.5 L56,257 L43,249 Z" fill="#fff" stroke-width="1.5"/>
<path d="M47,245.5 L51,243.5 L61,250 L59.5,253 L55,253.5 L47.5,248 Z" stroke-width="1.2"/>
<path d="M50,246 L57,250.5" stroke-width="1.2"/>
<g stroke-width="1.4">
<ellipse cx="49.6" cy="261.5" rx="5.2" ry="3.3" transform="rotate(-12 49.6 261.5)"/>
<ellipse cx="47" cy="270" rx="4.9" ry="3.1" transform="rotate(-12 47 270)"/>
<ellipse cx="44.3" cy="277.6" rx="4.5" ry="2.8" transform="rotate(-12 44.3 277.6)"/>
<ellipse cx="41.6" cy="284.4" rx="4.1" ry="2.4" transform="rotate(-12 41.6 284.4)"/>
<ellipse cx="39.3" cy="291.1" rx="4.1" ry="2.4" transform="rotate(-12 39.3 291.1)"/>
<ellipse cx="37.3" cy="297.4" rx="3.2" ry="1.8" transform="rotate(-12 37.3 297.4)"/>
<ellipse cx="33.7" cy="307.3" rx="2.3" ry="1.6" transform="rotate(-12 33.7 307.3)"/>
</g>
<g stroke-width="1" stroke="#222">
<path d="M36.2,215.3 L49,227.8"/>
<path d="M86.7,213.4 L100.5,213.4"/>
<path d="M67,226.5 L90,232"/>
<path d="M65.8,252.8 L88,253.5"/>
<path d="M55.7,263.5 L87.4,263.9"/>
<path d="M52.3,271.6 L87.4,272.2"/>
<path d="M49,279 L87.4,279.4"/>
<path d="M45.6,286.4 L86,289"/>
<path d="M43.6,293 L86,297.4"/>
<path d="M40,299 L84.7,307.3"/>
<path d="M36,309.3 L84,320"/>
</g>
<path d="M87,225.8 H101.2 V328.3 H86" stroke="#707070" stroke-width="1.3" stroke-linecap="butt"/>
<path d="M101.2,272 H108" stroke="#333" stroke-width="1"/>
<!-- box 24 -->
<rect x="132" y="192.5" width="39.3" height="62" stroke="#707070" stroke-width="1.2"/>
<g stroke-width="1.7">
<ellipse cx="156.4" cy="201.4" rx="4.9" ry="3.3" transform="rotate(-15 156.4 201.4)"/>
<ellipse cx="153.7" cy="209.9" rx="4.5" ry="3.1" transform="rotate(-15 153.7 209.9)"/>
<ellipse cx="151" cy="217.3" rx="4.2" ry="2.9" transform="rotate(-15 151 217.3)"/>
<ellipse cx="148.3" cy="224.7" rx="3.9" ry="2.6" transform="rotate(-15 148.3 224.7)"/>
<ellipse cx="146" cy="231.5" rx="3.9" ry="2.6" transform="rotate(-15 146 231.5)"/>
<ellipse cx="144.2" cy="238" rx="2.9" ry="1.8" transform="rotate(-15 144.2 238)"/>
<ellipse cx="140.2" cy="247.2" rx="2.2" ry="1.5" transform="rotate(-15 140.2 247.2)"/>
</g>
<path d="M171.4,223 L181,223.6" stroke-width="1"/>
<!-- ===== Tube group ===== -->
<path d="M132.8,326 V341" stroke-width="1"/>
<path d="M126.5,343.5 L140,339.5 L141.5,343.5 L128,347.5 Z" fill="#333" stroke-width="1.2"/>
<path d="M129.3,342.8 L130.3,346.5 M132.3,341.9 L133.3,345.6 M135.3,341 L136.3,344.7 M138.3,340.1 L139.2,343.7" stroke="#fff" stroke-width="0.8"/>
<path d="M95.5,352 L98,348.5 L102,349 L104,352.5 L102.5,357.5 L98.5,358.5 L95.8,356 Z" fill="#fff" stroke-width="1.6"/>
<circle cx="99.5" cy="353" r="2.2" stroke-width="1.4"/><path d="M97,350 L101,351" stroke-width="0.9"/>
<path d="M102,356.5 Q106,361.5 112,361 L116.5,359 M104,351.5 Q107,356.5 112,356.5 L116,354.5" stroke-width="1.1"/>
<path d="M116,354 L120,351.3 L124,351.7 L126,355.5 L124,359.5 L119.5,360 L116.5,357.5 Z" fill="#fff" stroke-width="1.2"/>
<path d="M122,352 L130.5,349.8 L132,355 L124.5,359" fill="#fff" stroke-width="1.1"/>
<path d="M130.5,349.8 L145.5,345.5 L146.5,349.5 L132,355" stroke-width="1.1"/>
<path d="M142.5,346.5 L143.5,350.5" stroke-width="1.8"/>
<path d="M146.5,348 C160,342 172,337.5 185,337 C220,336.5 255,352 280,379 C299,400 310.5,423 311,446 C311.5,463 305,472 292,477 L278.5,480.5" stroke-width="0.9" stroke-dasharray="3,2"/>
<path d="M107.2,360.5 V377" stroke-width="1"/>
<path d="M125.3,358 V375" stroke-width="1"/>
<!-- ===== Pump group ===== -->
<path d="M130,421.2 L140.7,433" stroke-width="1"/>
<path d="M136.5,437.5 L148.5,431 M138.5,440.5 L150,434" stroke-width="1.1"/>
<path d="M147.5,430 L151.5,428 L153.5,432 L151,436 L147.5,435 Z" fill="#fff" stroke-width="1.2"/>
<path d="M139,436 L140,439.5 M141.5,434.5 L142.5,438 M144,433 L145,436.5" stroke-width="0.9"/>
<path d="M153.7,424.7 L167.8,438.9" stroke-width="1"/>
<path d="M155,446 L166,440 M157,449 L168,443" stroke-width="1.1"/>
<path d="M165,438.5 L169.5,437.5 L171,441.5 L168.5,445.5 L165,444.5 Z" fill="#fff" stroke-width="1.2"/>
<path d="M157.5,444 L158.5,447.5 M160,442.5 L161,446 M162.5,441 L163.5,444.5" stroke-width="0.9"/>
<path d="M182,432 L189.5,428.5 M183,434.5 L190.5,431" stroke-width="1.1"/>
<path d="M180,431.5 L183,430 L184.5,434 L181.5,435.5 Z" fill="#fff" stroke-width="1.1"/>
<ellipse cx="204.5" cy="425" rx="2.4" ry="3" fill="#555" stroke-width="1.2"/><ellipse cx="204.8" cy="424.8" rx="0.9" ry="1.2" fill="#fff" stroke="none"/>
<ellipse cx="216.5" cy="421.5" rx="2.4" ry="3" fill="#555" stroke-width="1.2"/><ellipse cx="216.8" cy="421.3" rx="0.9" ry="1.2" fill="#fff" stroke="none"/>
<path d="M219,421 L246.7,413 V460.7 L260.5,453.3" stroke-width="0.9" stroke-dasharray="3,2"/>
<path d="M146.6,456.6 L158.4,467.2" stroke-width="1"/>
<path d="M120.7,471.9 L132.5,482.5" stroke-width="1"/>
<path d="M97,492 L107.7,500" stroke-width="1"/>
<path d="M67.7,513 L78.3,522.5" stroke-width="1"/>
<!-- pump body -->
<path d="M150.9,479.2 L154.4,472.1 L158,466.2 L163.8,460.3 L174.4,459.1 L183.9,455.6 L194.5,452.1 L200.4,450.3 L212.1,455.6 L216.8,462.7 L215.7,467.4 L213.3,470.9 L212.1,478 L206.2,482.7 L202.7,485 L203.9,489.8 L200.4,494.5 L192.1,499.2 L182.7,506.2 L176.8,511 L170.9,510.4 L167.4,506.2 L160.3,501.5 L160.3,495.6 L155.6,493.3 L151.5,487.4 Z" fill="#fff" stroke-width="1.3"/>
<ellipse cx="163.5" cy="483.8" rx="12.2" ry="12.2" fill="#fff" stroke-width="1.3"/>
<ellipse cx="161.5" cy="485.5" rx="10" ry="10" stroke-width="1"/>
<ellipse cx="160" cy="486.5" rx="7.5" ry="7.8" stroke-width="0.8"/>
<ellipse cx="157" cy="488" rx="5.2" ry="5.5" fill="#fff" stroke-width="1.8"/>
<circle cx="156.5" cy="488.2" r="2.7" stroke-width="1.6"/>
<circle cx="156.2" cy="488.3" r="1.1" fill="#222"/>
<path d="M178.5,474.4 V511" stroke-width="1"/>
<path d="M166,460 L170,465 L176,464 M172,459.5 L176,462" stroke-width="0.9"/>
<circle cx="166" cy="469" r="1.3"/><circle cx="163" cy="498" r="1.3"/><circle cx="172.5" cy="507.5" r="1.3"/>
<circle cx="185.5" cy="468.6" r="4.2" fill="#fff" stroke-width="1.6"/><path d="M182.5,471 Q185,466 188.5,467" stroke-width="1.2"/>
<path d="M182.7,478 V487.4 L198,481.5" stroke-width="0.9"/>
<path d="M180.3,493.3 L195.6,486.8 M180.3,503.9 L199.2,496.8 M195,484 L198,490" stroke-width="0.9"/>
<path d="M194.5,452.1 L200.4,450.3 L212.1,455.6 L216.8,462.7 L215.7,467.4 L206,475.5 L199,476.5 L196.5,466 Z" fill="#fff" stroke-width="1.2"/>
<circle cx="207.4" cy="461.5" r="5.5" stroke-width="1.1"/>
<circle cx="202" cy="453.5" r="1"/><circle cx="214" cy="466" r="1"/><circle cx="203.9" cy="471.5" r="1"/>
<!-- gasket 15 -->
<path d="M230.8,438.2 V445.3" stroke-width="1"/>
<path d="M221,451 L226.5,444 L234,445.5 L240,454 L239.5,466 L230,471 L222,468.5 L218.8,459 Z" fill="#fff" stroke-width="1.3"/>
<circle cx="229.8" cy="456.4" r="5" stroke-width="1.1"/>
<circle cx="225.5" cy="448" r="1"/><circle cx="236.5" cy="452.5" r="1"/><circle cx="236" cy="465" r="1"/><circle cx="223.5" cy="465" r="1"/>
<path d="M235,457 L245,451.5" stroke-width="0.9" stroke-dasharray="3,2"/>
<!-- regulator 14 -->
<path d="M272.3,421.2 V436" stroke-width="1.1"/>
<path d="M259.8,447 L261.8,436.8 Q266,432.5 272.6,436.6 L273.5,441 L270.8,453.5 L263.3,459 L260.5,455 Z" fill="#fff" stroke-width="1.4"/>
<circle cx="267.6" cy="437.3" r="1.5" fill="#222" stroke="none"/>
<path d="M272,440.8 L281.6,436.2 L287.8,446.5 L270.8,453.8 Z" fill="#fff" stroke-width="1.3"/>
<path d="M272,440.8 L278.5,438 L281.6,436.2" stroke-width="2.2"/>
<ellipse cx="284.8" cy="439.6" rx="3.6" ry="3.9" fill="#fff" stroke-width="1.4"/>
<path d="M278.5,441.5 Q279.5,446 282.5,447.5" stroke-width="0.8"/>
<path d="M264,452 L268,449.5 L271,452.5 L267,455" stroke-width="1.8"/>
<ellipse cx="266.5" cy="457" rx="2" ry="1.6" stroke-width="1.1"/>
<path d="M262.5,449 L273.5,443.5 M276,451 L280,452" stroke-width="1"/>
<circle cx="255.8" cy="450" r="2.9" fill="#fff" stroke-width="1.5"/>
<path d="M245,451 L253,449.3" stroke-width="1"/>
<path d="M219.2,479.2 V511 L227,509" stroke-width="0.9" stroke-dasharray="3,2"/>
<path d="M207.4,492 V538 L260,513" stroke-width="0.9" stroke-dasharray="3,2"/>
<ellipse cx="228.3" cy="507.2" rx="2" ry="1.8" stroke-width="1.2"/>
<path d="M234.5,504.5 L244.5,499.5" stroke-width="2.6"/>
<path d="M235,504.5 L244,500" stroke="#fff" stroke-width="0.8" stroke-dasharray="1,1.2"/>
<!-- part 16 -->
<path d="M262.5,480 V487.5" stroke-width="1"/>
<path d="M255,492 L277.5,479 M256.5,495 L279.5,482" stroke-width="1.1"/>
<path d="M246.5,494 L254,490.5 L258,496 L250,500 Z" fill="#fff" stroke-width="1.3"/>
<path d="M248.5,493.5 L251,499 M251.5,492 L254,497.5" stroke-width="1"/>
<!-- spring 20 -->
<path d="M283,486 H301.3" stroke-width="1"/>
<path d="M267.8,494.1 L282.9,486.5" stroke-width="3.6"/>
<path d="M268.5,494 L282.5,486.8" stroke="#fff" stroke-width="1" stroke-dasharray="1,1.5"/>
<!-- part 21 -->
<path d="M293,499 L303.7,508.4" stroke-width="1"/>
<path d="M257,510.5 L276,501 L278.5,505.5 L259.5,515 Z" fill="#fff" stroke-width="1.2"/>
<path d="M260.5,509 L262.5,513.5 M263.5,507.5 L265.5,512 M266.5,506 L268.5,510.5" stroke-width="0.9"/>
<path d="M275,500 L292,490.5 L298,497.5 L286,506 L279,506 Z" fill="#fff" stroke-width="1.2"/>
<ellipse cx="280.4" cy="500.8" rx="4" ry="5" fill="#fff" stroke-width="1.1"/>
<ellipse cx="295.6" cy="494.1" rx="3" ry="4" fill="#fff" stroke-width="1.2"/>
<path d="M282,505 L283,511 L289,510 L290,503" fill="#fff" stroke-width="1.1"/>
<!-- gasket 25 -->
<path d="M126.4,495.8 L134.1,483.2 L138.5,482.1 L150.5,493.6 L146.1,523.1 L140.6,525.3 L127.5,518.8 L125.9,507.8 Z" fill="#fff" stroke-width="1.4"/>
<path d="M130.8,496.9 L134.1,491.4 L140.6,489.8 L146.1,494.2 L142.8,507.8 L140.6,519.9 L137.4,521 L128.6,516.6 L128.6,507.8 L134.1,506.7 L129.7,501.3 Z" stroke-width="1.2"/>
<circle cx="137.4" cy="486" r="1.1"/>
<path d="M131,511 L136,510 L137,517 L131.5,516 Z" stroke-width="1.1"/>
<!-- gear 16 -->
<path d="M122.10,511.00 L122.06,512.10 L120.78,512.91 L120.62,513.84 L121.52,515.29 L121.20,516.28 L119.82,516.44 L119.45,517.22 L119.87,518.92 L119.32,519.66 L118.06,519.15 L117.52,519.64 L117.41,521.35 L116.71,521.72 L115.75,520.61 L115.13,520.75 L114.50,522.20 L113.76,522.15 L113.25,520.61 L112.64,520.38 L111.59,521.35 L110.92,520.88 L110.94,519.15 L110.44,518.58 L109.13,518.92 L108.63,518.11 L109.18,516.44 L108.86,515.62 L107.48,515.29 L107.23,514.25 L108.22,512.91 L108.13,511.96 L106.90,511.00 L106.94,509.90 L108.22,509.09 L108.38,508.16 L107.48,506.71 L107.80,505.72 L109.18,505.56 L109.55,504.78 L109.13,503.08 L109.68,502.34 L110.94,502.85 L111.48,502.36 L111.59,500.65 L112.29,500.28 L113.25,501.39 L113.87,501.25 L114.50,499.80 L115.24,499.85 L115.75,501.39 L116.36,501.62 L117.41,500.65 L118.08,501.12 L118.06,502.85 L118.56,503.42 L119.87,503.08 L120.37,503.89 L119.82,505.56 L120.14,506.38 L121.52,506.71 L121.77,507.75 L120.78,509.09 L120.87,510.04Z" fill="#444" stroke-width="1.2"/>
<path d="M110.5,499.8 L114.5,499.8 M110.5,522.2 L114.5,522.2" stroke-width="1.2"/>
<rect x="110.5" y="500" width="4" height="22" fill="#fff" stroke="none"/>
<path d="M118.10,511.00 L118.06,512.10 L116.78,512.91 L116.62,513.84 L117.52,515.29 L117.20,516.28 L115.82,516.44 L115.45,517.22 L115.87,518.92 L115.32,519.66 L114.06,519.15 L113.52,519.64 L113.41,521.35 L112.71,521.72 L111.75,520.61 L111.13,520.75 L110.50,522.20 L109.76,522.15 L109.25,520.61 L108.64,520.38 L107.59,521.35 L106.92,520.88 L106.94,519.15 L106.44,518.58 L105.13,518.92 L104.63,518.11 L105.18,516.44 L104.86,515.62 L103.48,515.29 L103.23,514.25 L104.22,512.91 L104.13,511.96 L102.90,511.00 L102.94,509.90 L104.22,509.09 L104.38,508.16 L103.48,506.71 L103.80,505.72 L105.18,505.56 L105.55,504.78 L105.13,503.08 L105.68,502.34 L106.94,502.85 L107.48,502.36 L107.59,500.65 L108.29,500.28 L109.25,501.39 L109.87,501.25 L110.50,499.80 L111.24,499.85 L111.75,501.39 L112.36,501.62 L113.41,500.65 L114.08,501.12 L114.06,502.85 L114.56,503.42 L115.87,503.08 L116.37,503.89 L115.82,505.56 L116.14,506.38 L117.52,506.71 L117.77,507.75 L116.78,509.09 L116.87,510.04Z" fill="#fff" stroke-width="1.2"/>
<ellipse cx="110.3" cy="511.5" rx="1.7" ry="2.5" stroke-width="1.1"/>
<!-- washer -->
<ellipse cx="96" cy="519" rx="6" ry="7.2" fill="#fff" stroke-width="1.2"/>
<ellipse cx="98" cy="519" rx="4.5" ry="6.8" stroke-width="0.8"/>
<ellipse cx="94.7" cy="519.3" rx="1.5" ry="1.9" stroke-width="1"/>
<!-- bolt 17 -->
<path d="M81,524.5 L89,520.5 M82.5,528 L90,524" stroke-width="1.1"/>
<path d="M84,523 L85,527 M86.5,522 L87.5,526" stroke-width="0.8"/>
<path d="M74.5,526.5 L78.5,523.5 L82.5,525 L83,530 L79,532.5 L75,531 Z" fill="#fff" stroke-width="1.3"/>
</g>
<!-- labels -->
<g font-size="8.8" fill="#000" text-anchor="middle" letter-spacing="-0.2">
<rect x="24" y="207" width="10" height="10" fill="#ffff00"/><text x="29.0" y="215.2" fill="#000">11</text>
<rect x="100" y="208" width="11" height="10" fill="#ffff00"/><text x="105.5" y="216.2" fill="#000">12</text>
<rect x="180" y="217" width="12" height="9" fill="#ffff00"/><text x="186.0" y="224.2" fill="#000">24</text>
<rect x="108" y="267" width="7" height="9" fill="#00ff00"/><text x="111.5" y="274.2" fill="#000">1</text>
<rect x="125" y="316" width="13" height="10" fill="#ffff00"/><text x="131.5" y="324.2" fill="#000">20</text>
<rect x="100" y="377" width="12" height="10" fill="#ffff00"/><text x="106.0" y="385.2" fill="#000">19</text>
<rect x="119.5" y="375" width="11.5" height="10" fill="#ff8585"/><text x="125.2" y="383.2" fill="#333">18</text>
<rect x="118" y="413" width="12" height="9" fill="#ffff00"/><text x="124.0" y="420.2" fill="#000">22</text>
<rect x="142" y="417.5" width="12" height="8.5" fill="#ffff00"/><text x="148.0" y="424.2" fill="#000">23</text>
<rect x="136" y="447" width="11" height="10" fill="#00ff00"/><text x="141.5" y="455.2" fill="#000">13</text>
<rect x="107.5" y="464" width="13" height="9" fill="#ffff00"/><text x="114.0" y="471.2" fill="#000">25</text>
<rect x="255" y="472.5" width="12" height="8" fill="#ff8585"/><text x="261.0" y="478.7" fill="#333">16</text>
<rect x="301" y="480.5" width="13" height="10" fill="#ffff00"/><text x="307.5" y="488.7" fill="#000">20</text>
<rect x="301" y="507" width="12" height="10" fill="#ffff00"/><text x="307.0" y="515.2" fill="#000">21</text>
</g>
<g font-size="8.8" fill="#333" letter-spacing="-0.3">
<text x="88.5" y="234.4">2</text>
<text x="88.5" y="256">3</text>
<text x="88" y="266.4">4</text>
<text x="88" y="275">5</text>
<text x="88" y="283">6</text>
<text x="86.5" y="291">7</text>
<text x="87" y="300.4">8</text>
<text x="85.5" y="310.6">9</text>
<text x="86.5" y="325.5">10</text>
<text x="87.5" y="490.8">16</text>
<text x="58" y="512.8">17</text>
<text x="224.6" y="437.6">15</text>
<text x="268" y="420">14</text>
</g>
</svg>

<svg class="a" style="left:1026px;top:542px" width="45" height="52" viewBox="0 0 45 52">
<g fill="none" stroke="#1f56a3" stroke-width="2.6">
<circle cx="13.9" cy="11.7" r="6.9"/>
<circle cx="29.9" cy="11.7" r="6.9"/>
<circle cx="13.9" cy="28.9" r="6.9"/>
<circle cx="29.9" cy="28.9" r="6.9"/>
<path d="M9,16.6 L18.8,6.8 M25,6.8 L34.8,16.6 M9,24 L18.8,33.8 M25,33.8 L34.8,24" stroke-width="2.2"/>
</g>
<path d="M21.9,3 L23.6,7 L20.2,7 Z M21.9,37.6 L23.6,33.6 L20.2,33.6 Z M5.4,20.3 L9,18.6 L9,22 Z M38.4,20.3 L34.8,18.6 L34.8,22 Z" fill="#1f56a3"/>
<text x="3.8" y="49.3" font-family="Liberation Sans" font-weight="bold" font-size="10.6" fill="#1f56a3" letter-spacing="-0.3">Perkins</text>
<circle cx="42" cy="43.8" r="0.7" fill="#1f56a3"/>
</svg>

</body></html>
